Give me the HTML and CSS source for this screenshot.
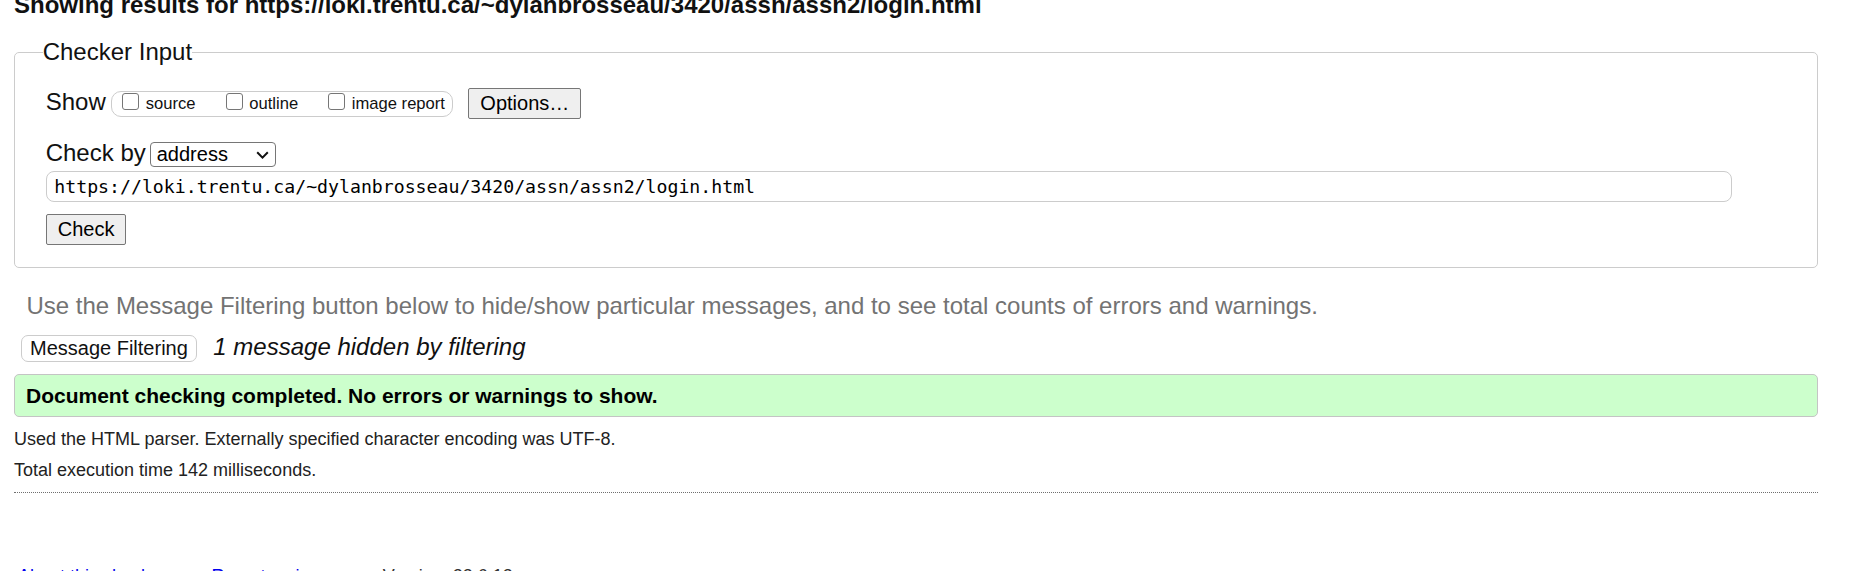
FILE: index.html
```html
<!DOCTYPE html>
<html lang="en">
<head>
<meta charset="utf-8">
<title>Showing results for https://loki.trentu.ca/~dylanbrosseau/3420/assn/assn2/login.html - Nu Html Checker</title>
<link rel="stylesheet" href="styles.css">
</head>
<body>
<div class="page">
  <h2 class="heading">Showing results for https://loki.trentu.ca/~dylanbrosseau/3420/assn/assn2/login.html</h2>
  <form class="checker">
    <fieldset class="inputs">
      <legend class="legend">Checker Input</legend>
      <div class="row row-show">
        <span class="label">Show</span>
        <span class="show-box">
          <label class="opt"><input type="checkbox" class="cb"><span class="opt-text">source</span></label>
          <label class="opt"><input type="checkbox" class="cb"><span class="opt-text">outline</span></label>
          <label class="opt"><input type="checkbox" class="cb"><span class="opt-text">image report</span></label>
        </span>
        <button type="button" class="btn btn-options">Options…</button>
      </div>
      <div class="row row-by">
        <span class="label">Check by</span>
        <span class="select-wrap">
          <select class="select"><option>address</option><option>file upload</option><option>text input</option></select>
          <svg class="chevron" width="13" height="8" viewBox="0 0 13 8" aria-hidden="true"><path d="M1.2 1.3 L6.5 6.6 L11.8 1.3" fill="none" stroke="#111" stroke-width="2"/></svg>
        </span>
      </div>
      <input class="url" type="url" value="https://loki.trentu.ca/~dylanbrosseau/3420/assn/assn2/login.html">
      <button type="button" class="btn btn-check">Check</button>
    </fieldset>
  </form>
  <p class="hint">Use the Message Filtering button below to hide/show particular messages, and to see total counts of errors and warnings.</p>
  <div class="filter-row">
    <button type="button" class="btn-filter">Message Filtering</button>
    <span class="hidden-count">1 message hidden by filtering</span>
  </div>
  <div class="success">Document checking completed. No errors or warnings to show.</div>
  <p class="details">Used the HTML parser. Externally specified character encoding was UTF-8.</p>
  <p class="details details-next">Total execution time 142 milliseconds.</p>
  <hr class="divider">
  <p class="footer"><a href="#" class="link">About this checker</a><span class="sep">•</span><a href="#" class="link">Report an issue</a><span class="sep">•</span><span class="version">Version: 23.6.13</span></p>
</div>
</body>
</html>
```
FILE: styles.css
```css
html, body {
  margin: 0;
  padding: 0;
  background: #fff;
}

body {
  font-family: "Liberation Sans", Arial, sans-serif;
  color: #111;
  overflow: hidden;
}

.page {
  padding: 0 33px 0 14px;
}

.heading {
  margin: -9px 0 0;
  font-size: 24px;
  line-height: 28px;
  font-weight: bold;
  white-space: nowrap;
}

.checker {
  margin: 19px 0 0;
}

.inputs {
  margin: 0;
  border: 1px solid #ccc;
  border-radius: 5px;
  padding: 22px 0 22px 30.7px;
  min-width: 0;
}

.legend {
  margin-left: -3px;
  padding: 0;
  font-size: 24px;
  line-height: 28px;
  color: #111;
}

.row {
  display: flex;
  align-items: flex-start;
}

.label {
  font-size: 24px;
  line-height: 28px;
}

.show-box {
  display: flex;
  align-items: flex-start;
  gap: 30px;
  box-sizing: border-box;
  height: 26px;
  margin: 2.5px 0 0 5.3px;
  padding: 0 7px 0 10px;
  border: 1px solid #ccc;
  border-radius: 10px;
}

.opt {
  display: flex;
  align-items: flex-start;
  gap: 6.7px;
}

.cb {
  appearance: none;
  -webkit-appearance: none;
  box-sizing: border-box;
  width: 17px;
  height: 17px;
  margin: 1px 0 0;
  border: 1.5px solid #767676;
  border-radius: 3px;
  background: #fff;
}

.opt-text {
  margin-top: 2px;
  font-size: 16.6px;
  line-height: 19px;
  white-space: nowrap;
}

.btn {
  box-sizing: border-box;
  height: 31px;
  padding: 0 11px;
  border: 1px solid #767676;
  border-radius: 2px;
  background: #efefef;
  color: #000;
  font-family: "Liberation Sans", Arial, sans-serif;
  font-size: 20px;
  line-height: 29px;
}

.btn-options {
  margin-left: 15.4px;
}

.row-by {
  margin-top: 20px;
}

.select-wrap {
  position: relative;
  display: block;
  margin: 3px 0 0 4px;
}

.select {
  appearance: none;
  -webkit-appearance: none;
  display: block;
  box-sizing: border-box;
  width: 126px;
  height: 25px;
  margin: 0;
  padding: 0 0 0 6px;
  border: 1px solid #767676;
  border-radius: 4px;
  background: #fff;
  color: #000;
  font-family: "Liberation Sans", Arial, sans-serif;
  font-size: 20px;
  line-height: 23px;
}

.chevron {
  position: absolute;
  right: 7px;
  top: 9px;
  pointer-events: none;
}

.url {
  display: block;
  box-sizing: border-box;
  width: 1686px;
  height: 31px;
  margin: 4px 0 0;
  padding: 0 7.6px;
  border: 1px solid #ccc;
  border-radius: 8px;
  background: #fff;
  color: #000;
  font-family: "DejaVu Sans Mono", "Liberation Mono", monospace;
  font-size: 18.2px;
}

.btn-check {
  display: block;
  margin-top: 12px;
}

.hint {
  margin: 24px 0 0;
  padding-left: 12.5px;
  font-size: 24px;
  line-height: 28px;
  color: #737373;
  white-space: nowrap;
}

.filter-row {
  display: flex;
  align-items: baseline;
  gap: 16px;
  margin: 13px 0 0 6.5px;
}

.btn-filter {
  box-sizing: border-box;
  height: 27px;
  padding: 0 8.5px;
  border: 1px solid #ccc;
  border-radius: 7px;
  background: #fff;
  color: #111;
  font-family: "Liberation Sans", Arial, sans-serif;
  font-size: 20px;
  line-height: 25px;
}

.hidden-count {
  font-size: 24px;
  line-height: 28px;
  font-style: italic;
  color: #111;
}

.success {
  display: flex;
  align-items: center;
  box-sizing: border-box;
  height: 43px;
  margin-top: 12px;
  padding-left: 11px;
  border: 1px solid #c4c4c4;
  border-radius: 5px;
  background: #ccffcc;
  color: #000;
  font-size: 21px;
  font-weight: bold;
}

.details {
  margin: 12px 0 0;
  font-size: 18px;
  line-height: 21px;
  color: #222;
}

.details-next {
  margin-top: 10px;
}

.divider {
  height: 0;
  margin: 11px 0 0;
  border: 0;
  border-top: 1px dotted #6f6f6f;
}

.footer {
  margin: 73px 0 0 4px;
  font-size: 18px;
  line-height: 21px;
  color: #333;
  white-space: nowrap;
}

.link {
  color: #0000ee;
  text-decoration: underline;
}

.sep {
  padding: 0 19.5px;
  color: #666;
}

.version {
  color: #333;
}
```
